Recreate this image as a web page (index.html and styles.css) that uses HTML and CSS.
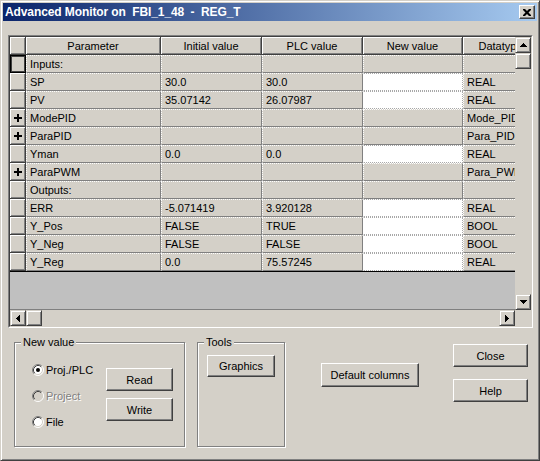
FILE: index.html
```html
<!DOCTYPE html>
<html>
<head>
<meta charset="utf-8">
<link rel="stylesheet" href="styles.css">
</head>
<body>
<div class="window">
  <div class="titlebar">
    <span class="title">Advanced Monitor on  FBI_1_48  -  REG_T</span>
    <span class="close-btn"><svg width="8" height="7" viewBox="0 0 8 7"><path d="M0 0h2l2 2 2-2h2v1L5.5 3.5 8 6v1H6L4 5 2 7H0V6l2.5-2.5L0 1z" fill="#000"/></svg></span>
  </div>
  <div class="client">
    <div class="gridframe">
      <div class="gridinner">
        <div class="gridtop">
          <div class="gridview">
            <div class="table">
              <div class="hc"></div><div class="hc">Parameter</div><div class="hc">Initial value</div><div class="hc">PLC value</div><div class="hc">New value</div><div class="hc">Datatype</div>

              <div class="rh focus"></div><div class="c">Inputs:</div><div class="c"></div><div class="c"></div><div class="c"></div><div class="c"></div>
              <div class="rh"></div><div class="c">SP</div><div class="c">30.0</div><div class="c">30.0</div><div class="c w"></div><div class="c">REAL</div>
              <div class="rh"></div><div class="c">PV</div><div class="c">35.07142</div><div class="c">26.07987</div><div class="c w"></div><div class="c">REAL</div>
              <div class="rh"><svg width="8" height="8" viewBox="0 0 8 8"><path d="M3 0h2v3h3v2H5v3H3V5H0V3h3z" fill="#000"/></svg></div><div class="c">ModePID</div><div class="c"></div><div class="c"></div><div class="c"></div><div class="c">Mode_PID</div>
              <div class="rh"><svg width="8" height="8" viewBox="0 0 8 8"><path d="M3 0h2v3h3v2H5v3H3V5H0V3h3z" fill="#000"/></svg></div><div class="c">ParaPID</div><div class="c"></div><div class="c"></div><div class="c"></div><div class="c">Para_PID</div>
              <div class="rh"></div><div class="c">Yman</div><div class="c">0.0</div><div class="c">0.0</div><div class="c w"></div><div class="c">REAL</div>
              <div class="rh"><svg width="8" height="8" viewBox="0 0 8 8"><path d="M3 0h2v3h3v2H5v3H3V5H0V3h3z" fill="#000"/></svg></div><div class="c">ParaPWM</div><div class="c"></div><div class="c"></div><div class="c"></div><div class="c">Para_PWM</div>
              <div class="rh"></div><div class="c">Outputs:</div><div class="c"></div><div class="c"></div><div class="c"></div><div class="c"></div>
              <div class="rh"></div><div class="c">ERR</div><div class="c">-5.071419</div><div class="c">3.920128</div><div class="c w"></div><div class="c">REAL</div>
              <div class="rh"></div><div class="c">Y_Pos</div><div class="c">FALSE</div><div class="c">TRUE</div><div class="c w"></div><div class="c">BOOL</div>
              <div class="rh"></div><div class="c">Y_Neg</div><div class="c">FALSE</div><div class="c">FALSE</div><div class="c w"></div><div class="c">BOOL</div>
              <div class="rh"></div><div class="c">Y_Reg</div><div class="c">0.0</div><div class="c">75.57245</div><div class="c w"></div><div class="c">REAL</div>
            </div>
            <div class="empty"></div>
          </div>
          <div class="vscroll">
            <div class="sb-btn"><svg width="7" height="4" viewBox="0 0 7 4"><path d="M3 0h1v1h1v1h1v1h1v1H0V3h1V2h1V1h1z" fill="#000"/></svg></div>
            <div class="sb-btn"></div>
            <div class="sb-track"></div>
            <div class="sb-btn"><svg width="7" height="4" viewBox="0 0 7 4"><path d="M0 0h7v1H6v1H5v1H4v1H3V3H2V2H1V1H0z" fill="#000"/></svg></div>
          </div>
        </div>
        <div class="gridbottom">
          <div class="hscroll">
            <div class="sb-btn"><svg width="4" height="7" viewBox="0 0 4 7"><path d="M4 0v7H3V6H2V5H1V4H0V3h1V2h1V1h1V0z" fill="#000"/></svg></div>
            <div class="sb-btn"></div>
            <div class="sb-track"></div>
            <div class="sb-btn"><svg width="4" height="7" viewBox="0 0 4 7"><path d="M0 0h1v1h1v1h1v1h1v1H3v1H2v1H1v1H0z" fill="#000"/></svg></div>
          </div>
          <div class="corner"></div>
        </div>
      </div>
    </div>

    <div class="bottom">
      <fieldset class="group newvalue">
        <legend>New value</legend>
        <div class="nv-body">
          <div class="radios">
            <div class="radio"><svg width="12" height="12" viewBox="0 0 12 12"><circle cx="6" cy="6" r="5" fill="#fff"/><path d="M2.11 9.89A5.5 5.5 0 0 1 9.89 2.11" fill="none" stroke="#808080"/><path d="M9.89 2.11A5.5 5.5 0 0 1 2.11 9.89" fill="none" stroke="#fff"/><path d="M2.82 9.18A4.5 4.5 0 0 1 9.18 2.82" fill="none" stroke="#404040"/><path d="M9.18 2.82A4.5 4.5 0 0 1 2.82 9.18" fill="none" stroke="#D4D0C8"/><circle cx="6" cy="6" r="2" fill="#000"/></svg><span>Proj./PLC</span></div>
            <div class="radio disabled"><svg width="12" height="12" viewBox="0 0 12 12"><circle cx="6" cy="6" r="5" fill="#D4D0C8"/><path d="M2.11 9.89A5.5 5.5 0 0 1 9.89 2.11" fill="none" stroke="#808080"/><path d="M9.89 2.11A5.5 5.5 0 0 1 2.11 9.89" fill="none" stroke="#fff"/><path d="M2.82 9.18A4.5 4.5 0 0 1 9.18 2.82" fill="none" stroke="#404040"/><path d="M9.18 2.82A4.5 4.5 0 0 1 2.82 9.18" fill="none" stroke="#D4D0C8"/></svg><span>Project</span></div>
            <div class="radio"><svg width="12" height="12" viewBox="0 0 12 12"><circle cx="6" cy="6" r="5" fill="#fff"/><path d="M2.11 9.89A5.5 5.5 0 0 1 9.89 2.11" fill="none" stroke="#808080"/><path d="M9.89 2.11A5.5 5.5 0 0 1 2.11 9.89" fill="none" stroke="#fff"/><path d="M2.82 9.18A4.5 4.5 0 0 1 9.18 2.82" fill="none" stroke="#404040"/><path d="M9.18 2.82A4.5 4.5 0 0 1 2.82 9.18" fill="none" stroke="#D4D0C8"/></svg><span>File</span></div>
          </div>
          <div class="rw">
            <button class="btn btn-rw">Read</button>
            <button class="btn btn-rw">Write</button>
          </div>
        </div>
      </fieldset>
      <fieldset class="group tools">
        <legend>Tools</legend>
        <div class="tools-body">
          <button class="btn btn-graphics">Graphics</button>
        </div>
      </fieldset>
      <button class="btn btn-default">Default columns</button>
      <div class="rightbtns">
        <button class="btn btn-side">Close</button>
        <button class="btn btn-side">Help</button>
      </div>
    </div>
  </div>
</div>
</body>
</html>
```

FILE: styles.css
```css
* { box-sizing: border-box; }
html, body { margin: 0; padding: 0; }
body {
  width: 540px;
  height: 461px;
  overflow: hidden;
  background: #D4D0C8;
  font-family: "Liberation Sans", Arial, sans-serif;
  font-size: 11px;
  color: #000;
}

.window {
  width: 540px;
  height: 461px;
  border: 1px solid;
  border-color: #D4D0C8 #404040 #404040 #D4D0C8;
  box-shadow: inset 1px 1px #fff, inset -1px -1px #808080;
  padding: 2px;
  display: flex;
  flex-direction: column;
  background: #D4D0C8;
}

.titlebar {
  height: 18px;
  flex: none;
  background: linear-gradient(to right, #0A246A, #A6CAF0);
  display: flex;
  align-items: center;
  justify-content: space-between;
  padding: 0 2px 0 2px;
}
.title {
  color: #fff;
  font-weight: bold;
  font-size: 12px;
  letter-spacing: -0.1px;
  white-space: pre;
}
.close-btn {
  width: 16px;
  height: 14px;
  background: #D4D0C8;
  border: 1px solid;
  border-color: #fff #404040 #404040 #fff;
  box-shadow: inset -1px -1px #808080;
  display: flex;
  align-items: center;
  justify-content: center;
}
.close-btn svg { display: block; }

.client {
  flex: 1;
  padding: 14px 4px 0 5px;
  display: flex;
  flex-direction: column;
}

.gridframe {
  height: 293px;
  flex: none;
  border: 1px solid;
  border-color: #808080 #fff #fff #808080;
}
.gridinner {
  height: 100%;
  border: 1px solid;
  border-color: #404040 #D4D0C8 #D4D0C8 #404040;
  display: flex;
  flex-direction: column;
}
.gridtop {
  display: flex;
  height: 273px;
}
.gridview {
  width: 505px;
  overflow: hidden;
  background: #C0C0C0;
  display: flex;
  flex-direction: column;
}
.table {
  display: grid;
  grid-template-columns: 16px 135px 101px 101px 100px 76px;
  grid-auto-rows: 18px;
  width: 529px;
  flex: none;
}
.hc {
  background: #D4D0C8;
  border-right: 1px solid #404040;
  border-bottom: 1px solid #404040;
  box-shadow: inset 1px 1px #fff, inset -1px -1px #808080;
  text-align: center;
  line-height: 18px;
  white-space: nowrap;
  overflow: hidden;
}
.rh {
  background: #D4D0C8;
  border-right: 1px solid #404040;
  border-bottom: 1px solid #404040;
  box-shadow: inset 1px 1px #fff, inset -1px -1px #808080;
  display: flex;
  align-items: center;
  justify-content: center;
}
.rh svg { display: block; }
.rh.focus {
  border: 1px solid #000;
  box-shadow: inset 0 0 0 1px #404040;
}
.c {
  background: #D4D0C8;
  border-top: 1px dotted #fff;
  border-left: 1px dotted #fff;
  border-right: 1px solid #808080;
  border-bottom: 1px solid #808080;
  padding-left: 3px;
  line-height: 16px;
  white-space: nowrap;
  overflow: hidden;
}
.c.w {
  background: #fff;
  border-style: dotted;
  border-color: #a8a8a8 #a8a8a8 #a8a8a8 #fff;
}
.empty {
  flex: 1;
  background: #C0C0C0;
  border-top: 1px solid #000;
  border-bottom: 1px solid #808080;
}

.vscroll {
  width: 16px;
  display: flex;
  flex-direction: column;
  background: #D4D0C8;
}
.sb-btn {
  width: 16px;
  height: 16px;
  flex: none;
  background: #D4D0C8;
  border: 1px solid;
  border-color: #D4D0C8 #404040 #404040 #D4D0C8;
  box-shadow: inset 1px 1px #fff, inset -1px -1px #808080;
  display: flex;
  align-items: center;
  justify-content: center;
}
.sb-btn svg { display: block; }
.sb-track { flex: 1; background: #D4D0C8; }

.gridbottom {
  display: flex;
  height: 16px;
}
.hscroll {
  width: 505px;
  display: flex;
}
.corner {
  flex: 1;
  background: #D4D0C8;
}

.bottom {
  display: flex;
  align-items: flex-start;
  margin-top: 8px;
  padding-left: 6px;
}
.group {
  margin: 0;
  padding: 0;
  min-width: 0;
  height: 111px;
  border: 1px solid #808080;
  box-shadow: inset 1px 1px #fff, 1px 1px #fff;
}
.group legend {
  margin-left: 6px;
  padding: 0 2px;
  line-height: 13px;
  background: #D4D0C8;
}
.newvalue { width: 171px; }
.tools { width: 88px; margin-left: 12px; }

.nv-body {
  display: flex;
  padding-left: 17px;
}
.radios {
  width: 74px;
  display: flex;
  flex-direction: column;
  gap: 10px;
  padding-top: 13px;
}
.radio {
  display: flex;
  align-items: center;
  gap: 2px;
  height: 16px;
}
.radio svg { display: block; flex: none; }
.radio.disabled span {
  color: #808080;
  text-shadow: 1px 1px #fff;
}
.rw {
  display: flex;
  flex-direction: column;
  gap: 7px;
  padding-top: 19px;
}

.btn {
  font: inherit;
  color: #000;
  background: #D4D0C8;
  border: 1px solid;
  border-color: #fff #404040 #404040 #fff;
  box-shadow: inset -1px -1px #808080;
  display: flex;
  align-items: center;
  justify-content: center;
  padding: 0;
  margin: 0;
}
.btn-rw { width: 67px; height: 23px; }
.tools-body { padding: 6px 0 0 9px; }
.btn-graphics { width: 68px; height: 22px; }
.btn-default { width: 98px; height: 24px; margin-left: 36px; margin-top: 27px; }
.rightbtns {
  display: flex;
  flex-direction: column;
  gap: 12px;
  margin-left: 34px;
  margin-top: 8px;
}
.btn-side { width: 75px; height: 23px; }
```
